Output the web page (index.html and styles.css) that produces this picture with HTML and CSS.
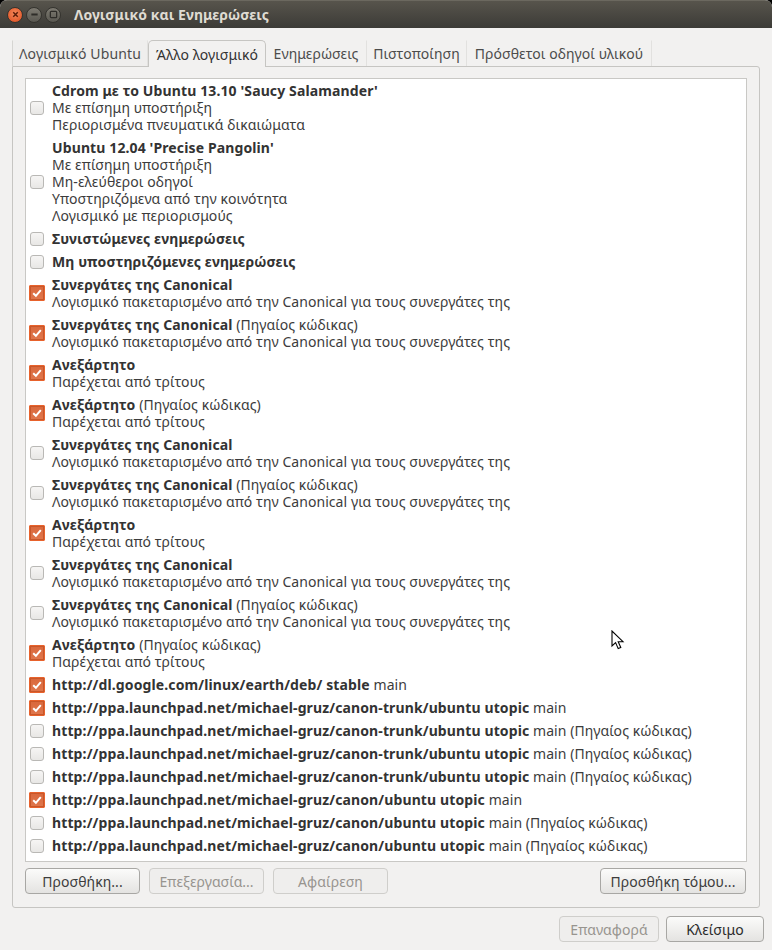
FILE: index.html
```html
<!DOCTYPE html>
<html lang="el">
<head>
<meta charset="utf-8">
<title>Λογισμικό και Ενημερώσεις</title>
<link rel="stylesheet" href="styles.css">
</head>
<body>
<div class="window">
  <header class="titlebar">
    <div class="wm">
      <span class="wm-btn close"><svg viewBox="0 0 10 10" width="10" height="10"><path d="M2.5 2.5l5 5M7.5 2.5l-5 5" stroke="#5a1c08" stroke-width="1.6"/></svg></span>
      <span class="wm-btn"><svg viewBox="0 0 10 10" width="10" height="10"><path d="M1.5 5h7" stroke="#2e2d29" stroke-width="2"/></svg></span>
      <span class="wm-btn"><svg viewBox="0 0 10 10" width="10" height="10"><rect x="1.5" y="1.5" width="7" height="7" rx="1" fill="none" stroke="#2e2d29" stroke-width="1.4"/></svg></span>
    </div>
    <span class="title">Λογισμικό και Ενημερώσεις</span>
  </header>
  <div class="content">
    <nav class="tabs">
      <span class="tab t1">Λογισμικό Ubuntu</span>
      <span class="tab t2 active">Άλλο λογισμικό</span>
      <span class="tab t3">Ενημερώσεις</span>
      <span class="tab t4">Πιστοποίηση</span>
      <span class="tab t5">Πρόσθετοι οδηγοί υλικού</span>
    </nav>
    <section class="notebook">
      <div class="list">
        <label class="row"><span class="cb"></span><span class="txt"><b>Cdrom με το Ubuntu 13.10 'Saucy Salamander'</b><br>Με επίσημη υποστήριξη<br>Περιορισμένα πνευματικά δικαιώματα</span></label>
        <label class="row"><span class="cb"></span><span class="txt"><b>Ubuntu 12.04 'Precise Pangolin'</b><br>Με επίσημη υποστήριξη<br>Μη-ελεύθεροι οδηγοί<br>Υποστηριζόμενα από την κοινότητα<br>Λογισμικό με περιορισμούς</span></label>
        <label class="row"><span class="cb"></span><span class="txt"><b>Συνιστώμενες ενημερώσεις</b></span></label>
        <label class="row"><span class="cb"></span><span class="txt"><b>Μη υποστηριζόμενες ενημερώσεις</b></span></label>
        <label class="row"><span class="cb on"><svg viewBox="0 0 14 14"><path d="M3.2 7.2l2.7 2.6 4.9-5.6" fill="none" stroke="#fff" stroke-width="2"/></svg></span><span class="txt"><b>Συνεργάτες της Canonical</b><br>Λογισμικό πακεταρισμένο από την Canonical για τους συνεργάτες της</span></label>
        <label class="row"><span class="cb on"><svg viewBox="0 0 14 14"><path d="M3.2 7.2l2.7 2.6 4.9-5.6" fill="none" stroke="#fff" stroke-width="2"/></svg></span><span class="txt"><b>Συνεργάτες της Canonical</b> (Πηγαίος κώδικας)<br>Λογισμικό πακεταρισμένο από την Canonical για τους συνεργάτες της</span></label>
        <label class="row"><span class="cb on"><svg viewBox="0 0 14 14"><path d="M3.2 7.2l2.7 2.6 4.9-5.6" fill="none" stroke="#fff" stroke-width="2"/></svg></span><span class="txt"><b>Ανεξάρτητο</b><br>Παρέχεται από τρίτους</span></label>
        <label class="row"><span class="cb on"><svg viewBox="0 0 14 14"><path d="M3.2 7.2l2.7 2.6 4.9-5.6" fill="none" stroke="#fff" stroke-width="2"/></svg></span><span class="txt"><b>Ανεξάρτητο</b> (Πηγαίος κώδικας)<br>Παρέχεται από τρίτους</span></label>
        <label class="row"><span class="cb"></span><span class="txt"><b>Συνεργάτες της Canonical</b><br>Λογισμικό πακεταρισμένο από την Canonical για τους συνεργάτες της</span></label>
        <label class="row"><span class="cb"></span><span class="txt"><b>Συνεργάτες της Canonical</b> (Πηγαίος κώδικας)<br>Λογισμικό πακεταρισμένο από την Canonical για τους συνεργάτες της</span></label>
        <label class="row"><span class="cb on"><svg viewBox="0 0 14 14"><path d="M3.2 7.2l2.7 2.6 4.9-5.6" fill="none" stroke="#fff" stroke-width="2"/></svg></span><span class="txt"><b>Ανεξάρτητο</b><br>Παρέχεται από τρίτους</span></label>
        <label class="row"><span class="cb"></span><span class="txt"><b>Συνεργάτες της Canonical</b><br>Λογισμικό πακεταρισμένο από την Canonical για τους συνεργάτες της</span></label>
        <label class="row"><span class="cb"></span><span class="txt"><b>Συνεργάτες της Canonical</b> (Πηγαίος κώδικας)<br>Λογισμικό πακεταρισμένο από την Canonical για τους συνεργάτες της</span></label>
        <label class="row"><span class="cb on"><svg viewBox="0 0 14 14"><path d="M3.2 7.2l2.7 2.6 4.9-5.6" fill="none" stroke="#fff" stroke-width="2"/></svg></span><span class="txt"><b>Ανεξάρτητο</b> (Πηγαίος κώδικας)<br>Παρέχεται από τρίτους</span></label>
        <label class="row"><span class="cb on"><svg viewBox="0 0 14 14"><path d="M3.2 7.2l2.7 2.6 4.9-5.6" fill="none" stroke="#fff" stroke-width="2"/></svg></span><span class="txt"><b>http://dl.google.com/linux/earth/deb/ stable</b> main</span></label>
        <label class="row"><span class="cb on"><svg viewBox="0 0 14 14"><path d="M3.2 7.2l2.7 2.6 4.9-5.6" fill="none" stroke="#fff" stroke-width="2"/></svg></span><span class="txt"><b>http://ppa.launchpad.net/michael-gruz/canon-trunk/ubuntu utopic</b> main</span></label>
        <label class="row"><span class="cb"></span><span class="txt"><b>http://ppa.launchpad.net/michael-gruz/canon-trunk/ubuntu utopic</b> main (Πηγαίος κώδικας)</span></label>
        <label class="row"><span class="cb"></span><span class="txt"><b>http://ppa.launchpad.net/michael-gruz/canon-trunk/ubuntu utopic</b> main (Πηγαίος κώδικας)</span></label>
        <label class="row"><span class="cb"></span><span class="txt"><b>http://ppa.launchpad.net/michael-gruz/canon-trunk/ubuntu utopic</b> main (Πηγαίος κώδικας)</span></label>
        <label class="row"><span class="cb on"><svg viewBox="0 0 14 14"><path d="M3.2 7.2l2.7 2.6 4.9-5.6" fill="none" stroke="#fff" stroke-width="2"/></svg></span><span class="txt"><b>http://ppa.launchpad.net/michael-gruz/canon/ubuntu utopic</b> main</span></label>
        <label class="row"><span class="cb"></span><span class="txt"><b>http://ppa.launchpad.net/michael-gruz/canon/ubuntu utopic</b> main (Πηγαίος κώδικας)</span></label>
        <label class="row"><span class="cb"></span><span class="txt"><b>http://ppa.launchpad.net/michael-gruz/canon/ubuntu utopic</b> main (Πηγαίος κώδικας)</span></label>
      </div>
      <div class="list-actions">
        <button class="btn w115">Προσθήκη...</button>
        <button class="btn w115" disabled>Επεξεργασία...</button>
        <button class="btn w115" disabled>Αφαίρεση</button>
        <button class="btn w146 push">Προσθήκη τόμου...</button>
      </div>
    </section>
    <footer class="dialog-actions">
      <button class="btn w100" disabled>Επαναφορά</button>
      <button class="btn w98 strong">Κλείσιμο</button>
    </footer>
  </div>
  <svg class="cursor" viewBox="0 0 14 21" width="14" height="21"><path d="M1 1v15l3.6-3.4 2.6 6 2.6-1.1-2.6-5.8H12z" fill="#fff" stroke="#000" stroke-width="1.1"/></svg>
</div>
</body>
</html>
```

FILE: styles.css
```css
* { box-sizing: border-box; }
html, body { margin: 0; padding: 0; background: #000; }
body { font-family: "Noto Sans", "Open Sans", sans-serif; font-size: 14px; letter-spacing: .06px; color: #3c3c3c; }
b { letter-spacing: .12px; color: #333; }
.window { position: relative; width: 772px; height: 950px; background: #f2f1f0; border-radius: 7px 7px 0 0; overflow: hidden; }

.titlebar { height: 28px; display: flex; align-items: center; background: linear-gradient(#57544c, #3c3b37); border-top: 1px solid #6b685f; }
.wm { display: flex; gap: 3px; margin-left: 7px; width: 67px; }
.wm-btn { width: 16px; height: 16px; border-radius: 50%; display: flex; align-items: center; justify-content: center; background: linear-gradient(#7d7a71, #5a5851); border: 1px solid #35342f; }
.wm-btn svg { width: 9px; height: 9px; }
.wm-btn.close { background: radial-gradient(circle at 50% 40%, #f58a5c, #dc4a1c); }
.title { color: #dfdbd2; font-weight: 700; font-size: 14px; letter-spacing: .05px; }

.content { padding: 12px 12px 0; }
.tabs { display: flex; height: 26px; position: relative; z-index: 1; }
.tab { display: flex; align-items: center; justify-content: center; height: 26px; color: #4c4c4c; border-right: 1px solid #e2e1df; border-top: 1px solid transparent; }
.t1 { width: 136px; background: #efeeed; border-left: 1px solid #d6d5d2; letter-spacing: .15px; }
.t2 { width: 118px; }
.t3 { width: 101px; }
.t4 { width: 100px; }
.t5 { width: 185px; }
.tab.active { height: 27px; background: #f2f1f0; color: #333; border: 1px solid #c6c5c2; border-bottom: 0; border-radius: 5px 5px 0 0; }

.notebook { height: 842px; border: 1px solid #c6c5c2; border-radius: 0 3px 3px 3px; padding: 11px 12px 12px 12px; display: flex; flex-direction: column; }
.list { height: 784px; background: #fff; border: 1px solid #c9c8c5; overflow: hidden; }
.row { display: flex; align-items: center; padding: 3px 4px; }
.cb { flex: none; width: 14px; height: 14px; margin-right: 8px; border: 1px solid #b9b8b5; border-radius: 3px; background: linear-gradient(#f6f5f4, #e8e7e5); }
.cb svg { display: block; width: 14px; height: 14px; }
.cb.on { width: 16px; height: 16px; margin: 0 7px 0 -1px; background: linear-gradient(#d9683c, #e0774d); border: 1px solid #e8622c; border-radius: 1px; box-shadow: inset 0 0 0 1px #c8572a; }
.txt { line-height: 17px; color: #3c3c3c; white-space: nowrap; }

.list-actions { display: flex; gap: 9px; margin-top: 6px; }
.btn { height: 26px; padding: 0; font: inherit; letter-spacing: inherit; color: #3c3c3c; border: 1px solid #a8a7a4; border-radius: 4px; background: linear-gradient(#fbfbfa, #e4e3e1); }
.btn:disabled { color: #97948f; border-color: #cfcecb; background: #efeeed; }
.strong { color: #2b2b2b; }
.w115 { width: 115px; }
.w146 { width: 146px; }
.w100 { width: 100px; }
.w98 { width: 98px; }
.push { margin-left: auto; margin-right: 1px; }
.dialog-actions { display: flex; justify-content: flex-end; gap: 7px; margin-top: 8px; margin-right: -4px; }

.cursor { position: absolute; left: 611px; top: 630px; }
```
